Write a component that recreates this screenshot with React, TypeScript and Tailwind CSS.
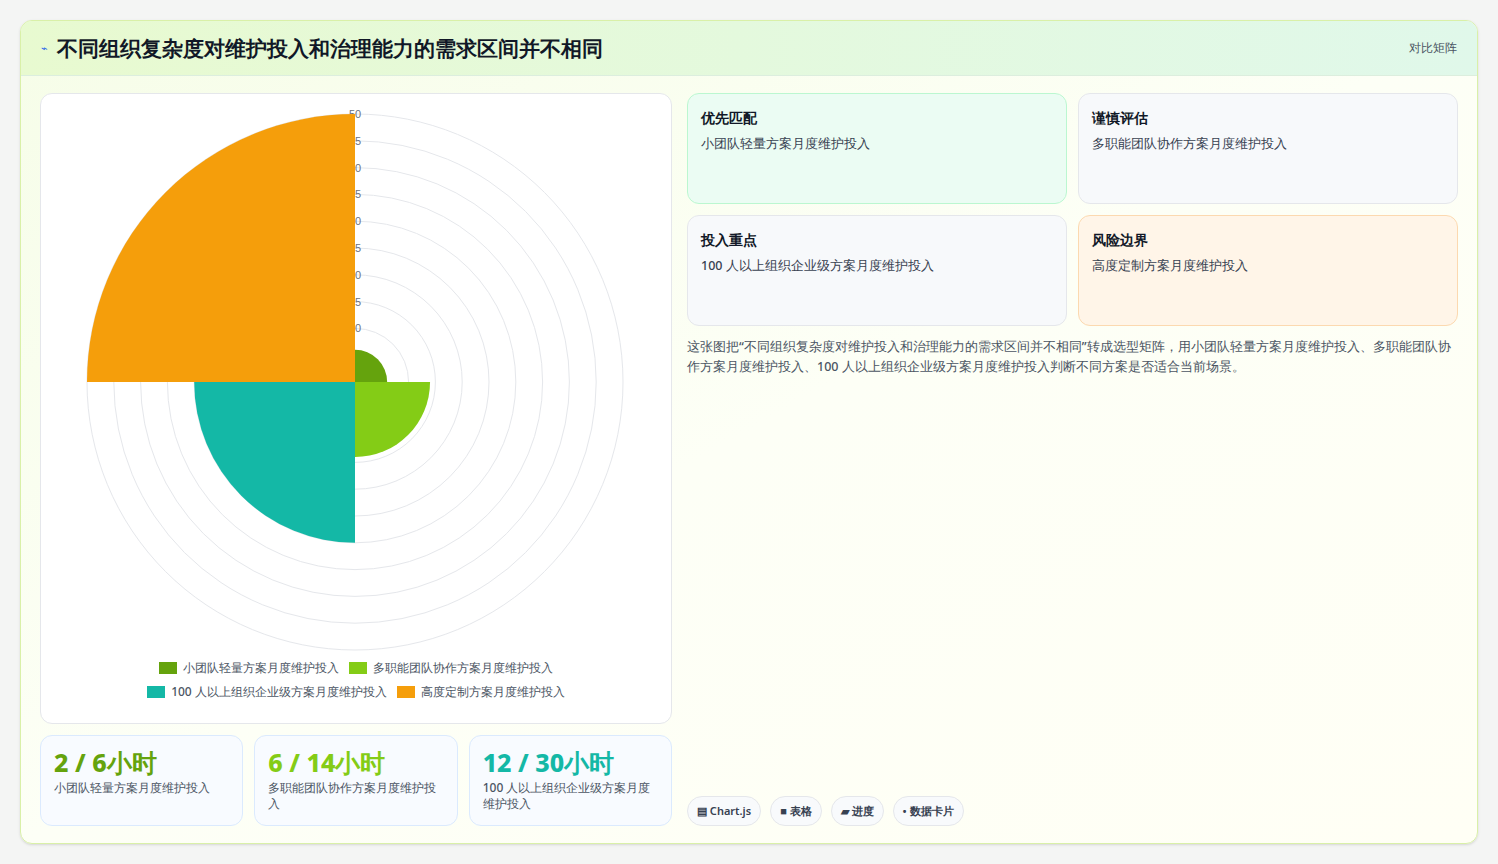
import React from "react";

const CX = 313;
const CY = 283;
const R = 268;

function sector(r: number, a0: number, a1: number) {
    const p = (a: number) => [CX + r * Math.cos((a * Math.PI) / 180), CY + r * Math.sin((a * Math.PI) / 180)];
    const [x0, y0] = p(a0);
    const [x1, y1] = p(a1);
    return `M${CX} ${CY} L${x0} ${y0} A${r} ${r} 0 0 1 ${x1} ${y1} Z`;
}

const SERIES = [
    { name: "小团队轻量方案月度维护投入", v: 6, color: "#65a30d" },
    { name: "多职能团队协作方案月度维护投入", v: 14, color: "#84cc16" },
    { name: "100 人以上组织企业级方案月度维护投入", v: 30, color: "#14b8a6" },
    { name: "高度定制方案月度维护投入", v: 50, color: "#f59e0b" },
];

const PolarChart = () => (
    <svg width="630" height="560" className="block">
        {Array.from({ length: 10 }).map((_, i) => (
            <circle key={i} cx={CX} cy={CY} r={(R * (i + 1)) / 10} fill="none" stroke="#e5e7eb" strokeWidth="1" />
        ))}
        {SERIES.slice(0, 3).map((s, i) => (
            <path key={s.name} d={sector((R * s.v) / 50, -90 + i * 90, i * 90)} fill={s.color} />
        ))}
        {Array.from({ length: 9 }).map((_, i) => {
            const val = 50 - i * 5;
            return (
                <text key={i} x={CX} y={CY - (R * val) / 50 + 4} fontSize="11" fill="#6b7280" textAnchor="middle" fontFamily="Liberation Sans, sans-serif">
                    {val}
                </text>
            );
        })}
        <path d={sector(R, 180, 270)} fill="#f59e0b" />
    </svg>
);

const Card = ({ title, text, cls }: { title: string; text: string; cls: string }) => (
    <div className={`h-[111px] rounded-xl border px-[13px] pt-[13px] ${cls}`}>
        <p className="text-[14px] font-bold text-[#111827]">{title}</p>
        <p className="mt-[7px] text-[12.5px] font-medium text-[#374151]">{text}</p>
    </div>
);

const Stat = ({ val, label, color }: { val: string; label: string; color: string }) => (
    <div className="h-[91px] flex-1 rounded-xl border border-[#dbeafe] bg-[#f8fbff] px-[13px] pt-[10px]">
        <p className={`text-[25px] font-extrabold leading-[32px] ${color}`}>{val}</p>
        <p className="mt-[2px] text-[12px] font-medium leading-[16px] text-[#4b5563]">{label}</p>
    </div>
);

export default function App() {
    return (
        <div className="min-h-[864px] bg-[#f4f5f4] p-[20px] font-['Inter','Noto_Sans_CJK_SC',sans-serif]">
            <div className="h-[824px] overflow-hidden rounded-xl border border-[#d9f0a8] bg-gradient-to-br from-[#f6fde8] via-[#fdfff6] to-[#fffff5] shadow">
                <div className="flex h-[55px] items-center justify-between border-b border-[#dceede] bg-gradient-to-r from-[#e8fad0] to-[#e0f8ea] px-[20px]">
                    <div className="flex items-center gap-[9px]">
                        <span className="text-[11px] text-[#2563eb]">⌁</span>
                        <h1 className="text-[20.5px] font-extrabold text-[#111827]">不同组织复杂度对维护投入和治理能力的需求区间并不相同</h1>
                    </div>
                    <span className="text-[12px] font-medium text-[#4b5563]">对比矩阵</span>
                </div>
                <div className="flex gap-[15px] px-[19px] pt-[17px]">
                    <div className="flex w-[632px] flex-col gap-[11px]">
                        <div className="h-[631px] rounded-xl border border-[#e5e7eb] bg-white">
                            <div className="pl-[1px] pt-[5px]">
                                <PolarChart />
                            </div>
                            <div className="flex flex-col items-center gap-[6px] text-[12px] font-medium text-[#4b5563]">
                                <div className="flex gap-[10px]">
                                    {SERIES.slice(0, 2).map((s) => (
                                        <span key={s.name} className="flex items-center gap-[6px]">
                                            <i className="inline-block h-[12px] w-[18px]" style={{ background: s.color }} />
                                            {s.name}
                                        </span>
                                    ))}
                                </div>
                                <div className="flex gap-[10px]">
                                    {SERIES.slice(2).map((s) => (
                                        <span key={s.name} className="flex items-center gap-[6px]">
                                            <i className="inline-block h-[12px] w-[18px]" style={{ background: s.color }} />
                                            {s.name}
                                        </span>
                                    ))}
                                </div>
                            </div>
                        </div>
                        <div className="flex gap-[11px]">
                            <Stat val="2 / 6小时" label="小团队轻量方案月度维护投入" color="text-[#65a30d]" />
                            <Stat val="6 / 14小时" label="多职能团队协作方案月度维护投入" color="text-[#84cc16]" />
                            <Stat val="12 / 30小时" label="100 人以上组织企业级方案月度维护投入" color="text-[#14b8a6]" />
                        </div>
                    </div>
                    <div className="flex flex-1 flex-col">
                        <div className="grid grid-cols-2 gap-[11px]">
                            <Card title="优先匹配" text="小团队轻量方案月度维护投入" cls="border-[#bbf7d0] bg-[#ebfcf3]" />
                            <Card title="谨慎评估" text="多职能团队协作方案月度维护投入" cls="border-[#e5e7eb] bg-[#f7f9fb]" />
                            <Card title="投入重点" text="100 人以上组织企业级方案月度维护投入" cls="border-[#e5e7eb] bg-[#f7f9fb]" />
                            <Card title="风险边界" text="高度定制方案月度维护投入" cls="border-[#fcd9b0] bg-[#fff5e8]" />
                        </div>
                        <p className="mt-[11px] text-[12.5px] font-medium leading-[20px] text-[#4b5563]">
                            这张图把“不同组织复杂度对维护投入和治理能力的需求区间并不相同”转成选型矩阵，用小团队轻量方案月度维护投入、多职能团队协作方案月度维护投入、100 人以上组织企业级方案月度维护投入判断不同方案是否适合当前场景。
                        </p>
                        <div className="mt-auto flex gap-[9px] text-[11px] font-semibold text-[#374151]">
                            {["▤ Chart.js", "■ 表格", "▰ 进度", "• 数据卡片"].map((t) => (
                                <span key={t} className="rounded-full border border-[#e5e7eb] bg-[#f8fafc] px-[9px] py-[6px]">
                                    {t}
                                </span>
                            ))}
                        </div>
                    </div>
                </div>
            </div>
        </div>
    );
}
